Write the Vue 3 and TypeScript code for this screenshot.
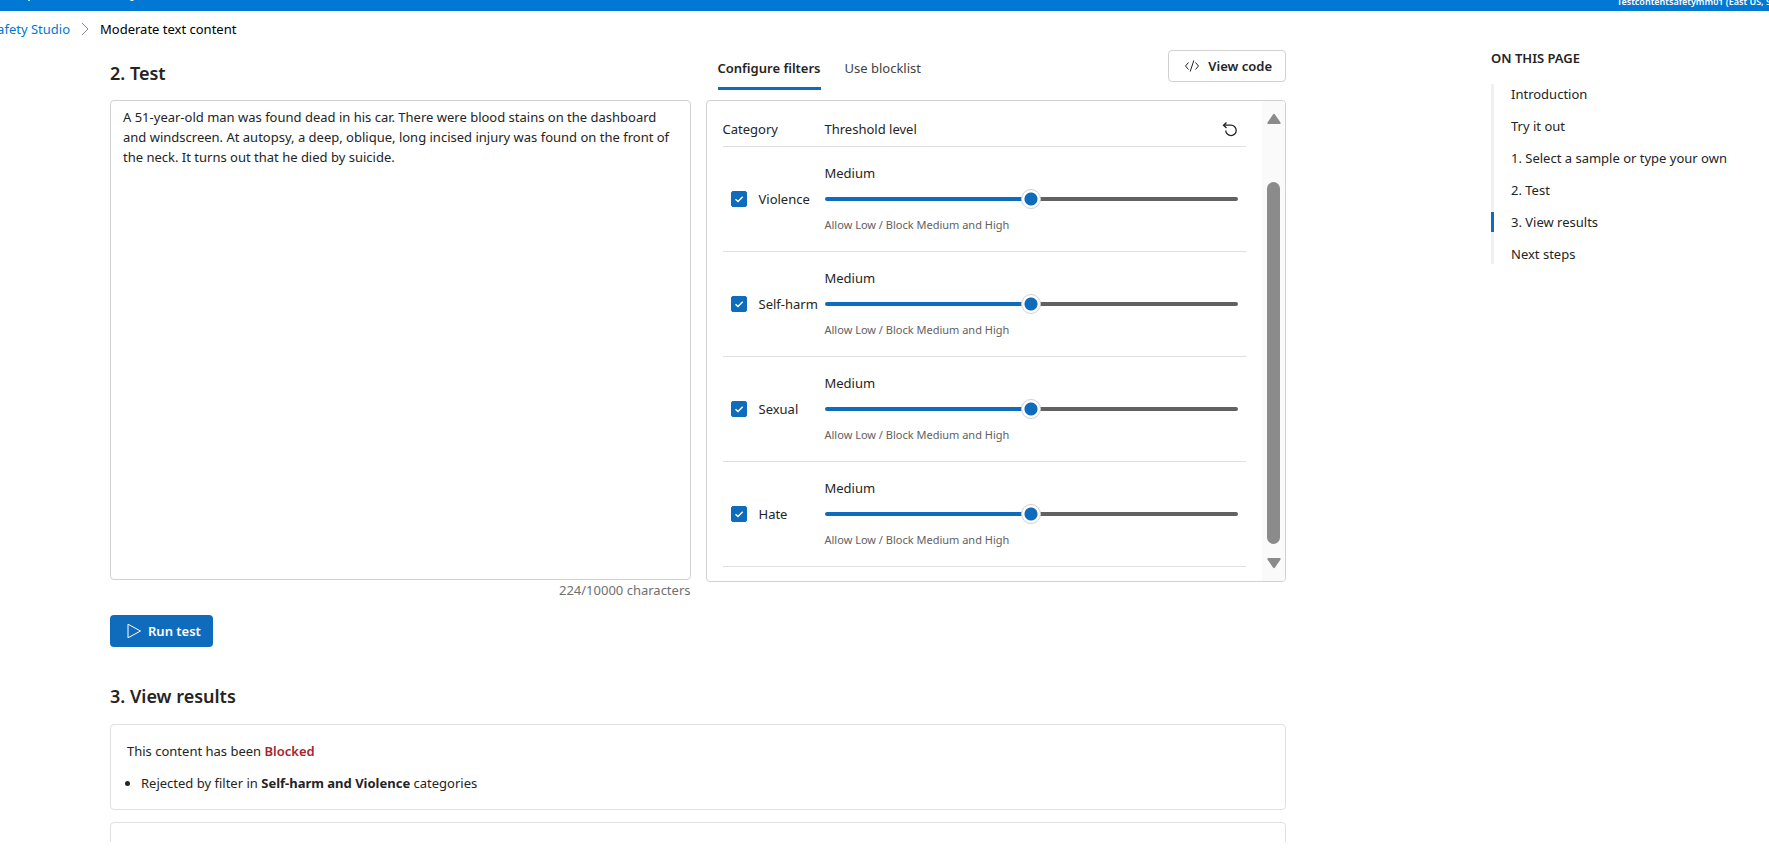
<script setup lang="ts">
import { computed, ref } from 'vue'

interface Filter {
  id: string
  name: string
  enabled: boolean
  level: number
}

const levels = ['High', 'Medium', 'Low']
const hints = ['Allow Low and Medium / Block High', 'Allow Low / Block Medium and High', 'Block Low, Medium and High']

const filters = ref<Filter[]>([
  { id: 'violence', name: 'Violence', enabled: true, level: 1 },
  { id: 'self-harm', name: 'Self-harm', enabled: true, level: 1 },
  { id: 'sexual', name: 'Sexual', enabled: true, level: 1 },
  { id: 'hate', name: 'Hate', enabled: true, level: 1 },
])

const content = ref(
  'A 51-year-old man was found dead in his car. There were blood stains on the dashboard and windscreen. At autopsy, a deep, oblique, long incised injury was found on the front of the neck. It turns out that he died by suicide.',
)
const count = computed(() => content.value.length || 0)

const sections = [
  'Introduction',
  'Try it out',
  '1. Select a sample or type your own',
  '2. Test',
  '3. View results',
  'Next steps',
]
const active = ref(4)
const tab = ref('filters')

function reset() {
  filters.value.forEach((f) => {
    f.enabled = true
    f.level = 1
  })
}
</script>

<template>
  <div class="page">
    <header class="topbar">
      <span class="product">| Content Safety Studio</span>
      <span class="resource">Testcontentsafetymm01 (East US, S0)</span>
    </header>

    <nav class="crumbs" aria-label="Breadcrumb">
      <a class="crumb-link" href="#">Safety Studio</a>
      <svg class="chevron" viewBox="0 0 8 14" aria-hidden="true"><path d="M1 1l6 6-6 6" /></svg>
      <span>Moderate text content</span>
    </nav>

    <div class="body">
      <main class="main">
        <section class="test">
          <div class="col">
            <h2 class="heading test-heading">2. Test</h2>
            <textarea v-model="content" class="input" aria-label="Text to test" spellcheck="false"></textarea>
            <div class="counter">{{ count }}/10000 characters</div>
          </div>
          <div class="col">
            <div class="toolbar">
              <div class="tabs" role="tablist">
                <button class="tab" :class="{ selected: tab === 'filters' }" role="tab" @click="tab = 'filters'">Configure filters</button>
                <button class="tab" :class="{ selected: tab === 'blocklist' }" role="tab" @click="tab = 'blocklist'">Use blocklist</button>
              </div>
              <button class="view-code">
                <svg class="code-icon" viewBox="0 0 16 16" aria-hidden="true">
                  <path d="M4.500 4.500L1.500 8l3 3.500M11.500 4.500l3 3.500-3 3.500M9.800 2.500l-3.600 11" />
                </svg>
                View code
              </button>
            </div>
            <div class="panel">
              <div class="filters">
                <div class="filter-head">
                  <span>Category</span>
                  <span>Threshold level</span>
                  <button class="reset" aria-label="Reset" @click="reset">
                    <svg viewBox="0 0 16 16" aria-hidden="true">
                      <path d="M4.500 1.500L1.500 4.200l3 2.700M1.500 4.200H9a5.200 5.200 0 1 1-5.200 5.200" />
                    </svg>
                  </button>
                </div>
                <div v-for="f in filters" :key="f.id" class="filter">
                  <label class="category">
                    <input v-model="f.enabled" class="check" type="checkbox" />
                    <svg class="tick" viewBox="0 0 16 16" aria-hidden="true"><path d="M4.500 8.200l2.500 2.400 4.700-4.800" /></svg>
                    {{ f.name }}
                  </label>
                  <div class="threshold">
                    <label class="level" :for="f.id">{{ levels[f.level] }}</label>
                    <input :id="f.id" v-model.number="f.level" class="slider" type="range" min="0" max="2" :style="{ '--fill': f.level * 50 + '%' }" />
                    <span class="hint">{{ hints[f.level] }}</span>
                  </div>
                </div>
              </div>
              <div class="scrollbar" aria-hidden="true">
                <svg class="arrow" viewBox="0 0 14 12"><path d="M6 1.500q1-1.500 2 0l5.500 8q.7 1.500-1 1.500h-11q-1.700 0-1-1.500z" /></svg>
                <div class="track"><div class="thumb"></div></div>
                <svg class="arrow down" viewBox="0 0 14 12"><path d="M6 1.500q1-1.500 2 0l5.500 8q.7 1.500-1 1.500h-11q-1.700 0-1-1.500z" /></svg>
              </div>
            </div>
          </div>
        </section>

        <button class="run">
          <svg class="play" viewBox="0 0 16 16" aria-hidden="true"><path d="M2 1.200v13.600L14.500 8z" /></svg>
          Run test
        </button>

        <h2 class="heading results-heading">3. View results</h2>
        <div class="results">
          <section class="card">
            <p class="verdict">This content has been <strong class="blocked">Blocked</strong></p>
            <ul class="reasons">
              <li>Rejected by filter in <strong>Self-harm and Violence</strong> categories</li>
            </ul>
          </section>
          <section class="card next-card"></section>
        </div>
      </main>

      <aside class="toc">
        <h3 class="toc-title">ON THIS PAGE</h3>
        <nav class="toc-list">
          <a v-for="(s, i) in sections" :key="s" href="#" class="toc-link" :class="{ active: i === active }" @click.prevent="active = i">{{ s }}</a>
        </nav>
      </aside>
    </div>
  </div>
</template>

<style>
body {
  margin: 0;
  background: #fff;
}
</style>

<style scoped>
.page {
  height: 100vh;
  overflow: hidden;
  box-sizing: border-box;
  padding-bottom: 16px;
  display: flex;
  flex-direction: column;
  font-family: 'Noto Sans', 'Open Sans', sans-serif;
  font-size: 13px;
  line-height: 20px;
  color: #242424;
}
button,
textarea {
  font: inherit;
  color: inherit;
}
button {
  cursor: pointer;
}
svg {
  fill: none;
  stroke: currentColor;
}
.topbar {
  flex: none;
  height: 11px;
  overflow: hidden;
  background: #0078d4;
  color: #fff;
  display: flex;
  justify-content: space-between;
  align-items: flex-end;
  white-space: nowrap;
}
.product {
  padding-left: 25px;
  font-size: 14px;
  line-height: 36px;
  font-weight: 600;
}
.resource {
  flex: none;
  width: 152px;
  font-size: 9px;
  line-height: 18px;
  font-weight: 600;
}
.crumbs {
  flex: none;
  display: flex;
  align-items: center;
  gap: 11px;
  height: 35px;
  margin-bottom: 2px;
  color: #000;
  white-space: nowrap;
}
.crumb-link {
  display: flex;
  justify-content: flex-end;
  width: 70px;
  color: #0078d4;
  text-decoration: none;
}
.chevron {
  flex: none;
  width: 8px;
  height: 14px;
  color: #8a8886;
}
.body {
  flex: 1;
  min-height: 0;
  overflow: hidden;
  display: grid;
  grid-template-columns: minmax(0, 1fr) 278px;
  column-gap: 205px;
  padding-left: 110px;
}
.test {
  display: grid;
  grid-template-columns: 1fr 1fr;
  column-gap: 15px;
}
.col {
  min-width: 0;
}
.heading {
  margin: 0;
  font-size: 18px;
  line-height: 28px;
  font-weight: 600;
}
.test-heading {
  padding: 11px 0 13px;
}
.input {
  display: block;
  box-sizing: border-box;
  width: 100%;
  height: 480px;
  padding: 6px 12px;
  border: 1px solid #d1d1d1;
  border-radius: 4px;
  resize: none;
  outline: none;
  background: #fff;
}
.counter {
  text-align: right;
  color: #707070;
}
.toolbar {
  display: flex;
  justify-content: space-between;
  align-items: flex-start;
  height: 52px;
  padding-top: 2px;
  box-sizing: border-box;
}
.tabs {
  display: flex;
  gap: 24px;
  padding-left: 12px;
}
.tab {
  padding: 8px 0 9px;
  border: 0;
  border-bottom: 3px solid transparent;
  background: none;
  color: #424242;
}
.tab.selected {
  border-bottom-color: #0f6cbd;
  color: #242424;
  font-weight: 600;
}
.view-code {
  display: flex;
  align-items: center;
  gap: 8px;
  padding: 5px 13px 5px 15px;
  border: 1px solid #d1d1d1;
  border-radius: 4px;
  background: #fff;
  font-weight: 600;
}
.code-icon {
  width: 16px;
  height: 16px;
}
.panel {
  box-sizing: border-box;
  height: 482px;
  border: 1px solid #d1d1d1;
  border-radius: 4px;
  display: flex;
  overflow: hidden;
}
.filters {
  flex: 1;
  padding: 0 16px;
}
.filter-head {
  display: grid;
  grid-template-columns: 102px 1fr auto;
  align-items: center;
  height: 46px;
  padding: 10px 8px 0 0;
  box-sizing: border-box;
  border-bottom: 1px solid #e0e0e0;
}
.reset {
  display: flex;
  padding: 0;
  border: 0;
  background: none;
}
.reset svg {
  width: 16px;
  height: 16px;
  stroke-width: 1.3;
}
.filter {
  display: grid;
  grid-template-columns: 102px 1fr;
  align-items: center;
  box-sizing: border-box;
  height: 105px;
  padding-right: 8px;
  border-bottom: 1px solid #e0e0e0;
}
.category {
  display: grid;
  grid-template-columns: 16px auto;
  align-items: center;
  justify-content: start;
  column-gap: 12px;
  padding-left: 8px;
  white-space: nowrap;
}
.check {
  grid-area: 1 / 1;
  appearance: none;
  width: 16px;
  height: 16px;
  margin: 0;
  border: 1px solid #616161;
  border-radius: 2px;
}
.check:checked {
  border-color: #0f6cbd;
  background: #0f6cbd;
}
.tick {
  grid-area: 1 / 1;
  width: 16px;
  height: 16px;
  color: #fff;
  stroke-width: 1.4;
  pointer-events: none;
}
.threshold {
  display: flex;
  flex-direction: column;
}
.slider {
  appearance: none;
  width: 100%;
  height: 32px;
  margin: 0;
  background: none;
}
.slider::-webkit-slider-runnable-track {
  height: 4px;
  border-radius: 2px;
  background: linear-gradient(to right, #0f6cbd var(--fill), #616161 var(--fill));
}
.slider::-webkit-slider-thumb {
  appearance: none;
  box-sizing: border-box;
  width: 20px;
  height: 20px;
  margin-top: -8px;
  border: 1px solid #d1d1d1;
  border-radius: 50%;
  background: radial-gradient(circle, #0f6cbd 6px, #fff 7px);
}
.hint {
  font-size: 11px;
  color: #616161;
}
.scrollbar {
  flex: none;
  width: 23px;
  box-sizing: border-box;
  display: flex;
  flex-direction: column;
  align-items: center;
  padding: 12px 0;
  background: #fafafa;
}
.arrow {
  width: 14px;
  height: 12px;
  fill: #8b8b8b;
  stroke: none;
}
.arrow.down {
  transform: rotate(180deg);
}
.track {
  flex: 1;
  width: 13px;
  padding: 57px 0 13px;
  display: flex;
}
.thumb {
  flex: 1;
  border-radius: 7px;
  background: #8b8b8b;
}
.run {
  display: flex;
  align-items: center;
  gap: 6px;
  height: 32px;
  margin-top: 15px;
  padding: 0 12px 0 16px;
  border: 0;
  border-radius: 4px;
  background: #0f6cbd;
  color: #fff;
  font-weight: 600;
}
.play {
  width: 16px;
  height: 16px;
  stroke-linejoin: round;
}
.results-heading {
  margin-top: 35px;
}
.results {
  display: grid;
  gap: 12px;
  margin-top: 14px;
}
.card {
  box-sizing: border-box;
  padding: 16px;
  border: 1px solid #e0e0e0;
  border-radius: 4px;
}
.next-card {
  height: 86px;
}
.verdict {
  margin: 0 0 12px;
}
.blocked {
  color: #a4262c;
  font-weight: 600;
}
.reasons {
  margin: 0;
  padding-left: 14px;
}
.toc-title {
  margin: 0 0 16px;
  font-size: 13px;
  line-height: 20px;
  font-weight: 600;
}
.toc-list {
  display: flex;
  flex-direction: column;
  gap: 12px;
  box-shadow: inset 3px 0 #f0f0f0;
}
.toc-link {
  padding-left: 17px;
  border-left: 3px solid transparent;
  color: #242424;
  text-decoration: none;
}
.toc-link.active {
  border-left-color: #0f6cbd;
}
</style>
